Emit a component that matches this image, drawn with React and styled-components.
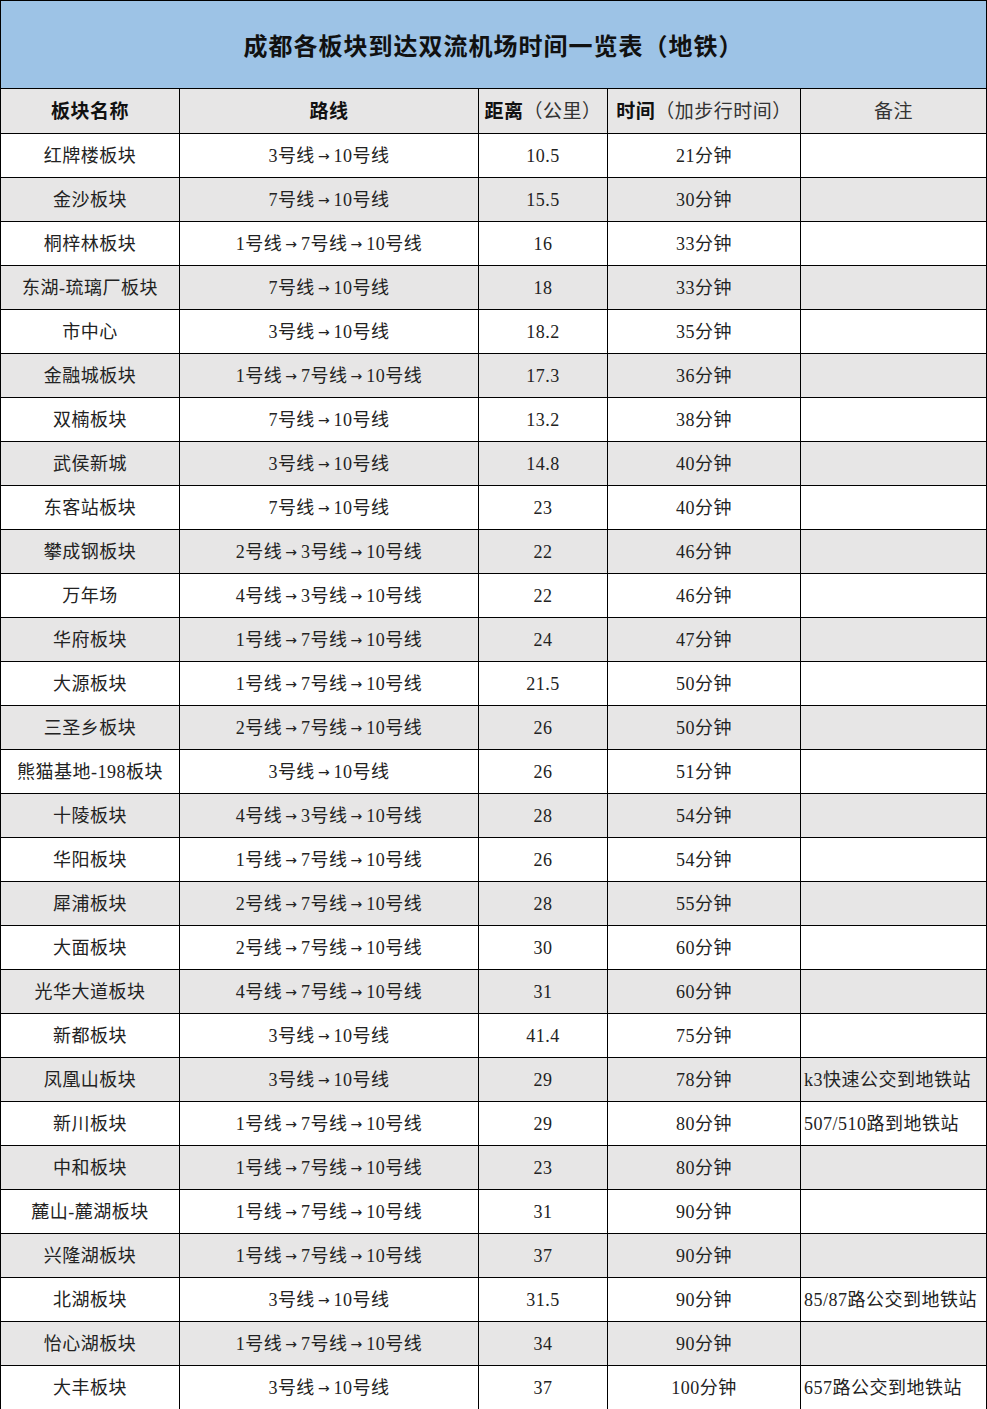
import React from "react";
import styled, { createGlobalStyle } from "styled-components";

const Global = createGlobalStyle`
  html, body { margin: 0; padding: 0; background: #fff; }
  body { font-family: "Liberation Serif", "Noto Sans CJK SC", serif; }
`;

const Table = styled.div`
  width: 987px;
  box-sizing: border-box;
  border-left: 1px solid #000;
  border-top: 1px solid #000;
`;

const Title = styled.div`
  height: 88px;
  box-sizing: border-box;
  border-right: 1px solid #000;
  border-bottom: 1px solid #000;
  background: #9dc3e6;
  display: flex;
  align-items: center;
  justify-content: center;
  font-family: "Noto Sans CJK SC", sans-serif;
  font-weight: 700;
  font-size: 24px;
  line-height: 30px;
  letter-spacing: 1px;
  color: #111;
  padding-top: 1px;
`;

const Row = styled.div`
  display: grid;
  grid-template-columns: 179px 299px 129px 193px 186px;
  height: ${(p) => (p.$header ? 45 : 44)}px;
  background: ${(p) => (p.$gray ? "#e7e6e6" : "#fff")};
`;

const Cell = styled.div`
  box-sizing: border-box;
  border-right: 1px solid #000;
  border-bottom: 1px solid #000;
  display: flex;
  align-items: center;
  justify-content: ${(p) => (p.$left ? "flex-start" : "center")};
  padding-left: ${(p) => (p.$left ? "3px" : "0")};
  padding-top: 1px;
  overflow: hidden;
  white-space: nowrap;
  font-family: "Liberation Serif", "Noto Sans CJK SC", serif;
  font-size: ${(p) => (p.$header ? 19 : 18)}px;
  letter-spacing: 0.5px;
  line-height: 20px;
  color: #222;
`;

const Text = styled.span`
  display: block;
  line-height: 20px;
`;

const Arrow = styled.span`
  font-family: "DejaVu Sans", sans-serif;
  font-size: 14px;
  letter-spacing: 0;
  margin: 0 4px 0 3px;
  position: relative;
  top: -1px;
`;

const B = styled.span`
  font-weight: 700;
  color: #111;
`;

const L = styled.span`
  font-weight: 400;
  color: #333;
`;

const rows = [
  ["红牌楼板块", "3号线→10号线", "10.5", "21分钟", ""],
  ["金沙板块", "7号线→10号线", "15.5", "30分钟", ""],
  ["桐梓林板块", "1号线→7号线→10号线", "16", "33分钟", ""],
  ["东湖-琉璃厂板块", "7号线→10号线", "18", "33分钟", ""],
  ["市中心", "3号线→10号线", "18.2", "35分钟", ""],
  ["金融城板块", "1号线→7号线→10号线", "17.3", "36分钟", ""],
  ["双楠板块", "7号线→10号线", "13.2", "38分钟", ""],
  ["武侯新城", "3号线→10号线", "14.8", "40分钟", ""],
  ["东客站板块", "7号线→10号线", "23", "40分钟", ""],
  ["攀成钢板块", "2号线→3号线→10号线", "22", "46分钟", ""],
  ["万年场", "4号线→3号线→10号线", "22", "46分钟", ""],
  ["华府板块", "1号线→7号线→10号线", "24", "47分钟", ""],
  ["大源板块", "1号线→7号线→10号线", "21.5", "50分钟", ""],
  ["三圣乡板块", "2号线→7号线→10号线", "26", "50分钟", ""],
  ["熊猫基地-198板块", "3号线→10号线", "26", "51分钟", ""],
  ["十陵板块", "4号线→3号线→10号线", "28", "54分钟", ""],
  ["华阳板块", "1号线→7号线→10号线", "26", "54分钟", ""],
  ["犀浦板块", "2号线→7号线→10号线", "28", "55分钟", ""],
  ["大面板块", "2号线→7号线→10号线", "30", "60分钟", ""],
  ["光华大道板块", "4号线→7号线→10号线", "31", "60分钟", ""],
  ["新都板块", "3号线→10号线", "41.4", "75分钟", ""],
  ["凤凰山板块", "3号线→10号线", "29", "78分钟", "k3快速公交到地铁站"],
  ["新川板块", "1号线→7号线→10号线", "29", "80分钟", "507/510路到地铁站"],
  ["中和板块", "1号线→7号线→10号线", "23", "80分钟", ""],
  ["麓山-麓湖板块", "1号线→7号线→10号线", "31", "90分钟", ""],
  ["兴隆湖板块", "1号线→7号线→10号线", "37", "90分钟", ""],
  ["北湖板块", "3号线→10号线", "31.5", "90分钟", "85/87路公交到地铁站"],
  ["怡心湖板块", "1号线→7号线→10号线", "34", "90分钟", ""],
  ["大丰板块", "3号线→10号线", "37", "100分钟", "657路公交到地铁站"],
];

function Route({ value }) {
  const parts = value.split("→");
  return (
    <Text>
      {parts.map((p, i) => (
        <React.Fragment key={i}>
          {i > 0 && <Arrow>→</Arrow>}
          {p}
        </React.Fragment>
      ))}
    </Text>
  );
}

export default function App() {
  return (
    <>
      <Global />
      <Table>
        <Title>成都各板块到达双流机场时间一览表（地铁）</Title>
        <Row $header $gray>
          <Cell $header><Text><B>板块名称</B></Text></Cell>
          <Cell $header><Text><B>路线</B></Text></Cell>
          <Cell $header><Text><B>距离</B><L>（公里）</L></Text></Cell>
          <Cell $header><Text><B>时间</B><L>（加步行时间）</L></Text></Cell>
          <Cell $header><Text><L>备注</L></Text></Cell>
        </Row>
        {rows.map((r, i) => (
          <Row key={i} $gray={i % 2 === 1}>
            <Cell><Text>{r[0]}</Text></Cell>
            <Cell><Route value={r[1]} /></Cell>
            <Cell><Text>{r[2]}</Text></Cell>
            <Cell><Text>{r[3]}</Text></Cell>
            <Cell $left><Text>{r[4]}</Text></Cell>
          </Row>
        ))}
      </Table>
    </>
  );
}
